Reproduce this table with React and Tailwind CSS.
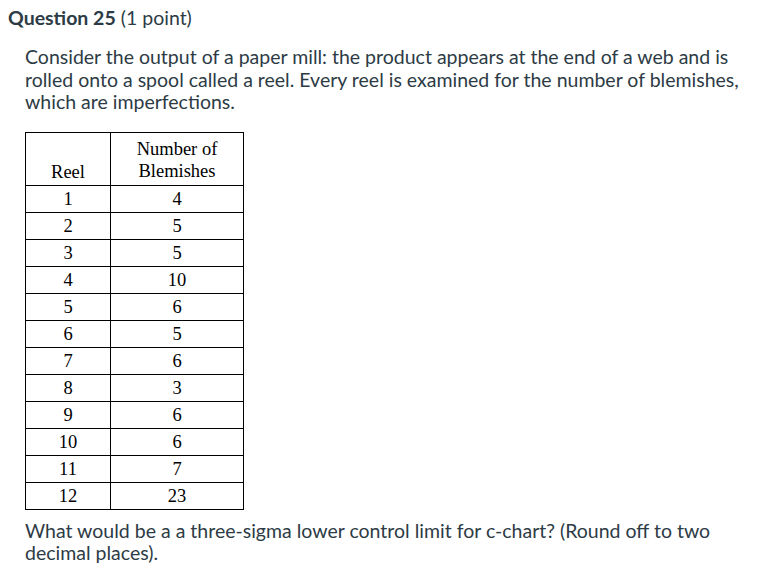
const rows = [
  [1, 4], [2, 5], [3, 5], [4, 10], [5, 6], [6, 5],
  [7, 6], [8, 3], [9, 6], [10, 6], [11, 7], [12, 23],
];

export default function App() {
  return (
    <div className="w-[768px] h-[575px] bg-white text-[#2d3b45] font-['Lato',sans-serif] overflow-hidden">
      <h2 className="pl-[8px] pt-[6px] text-[19.5px] leading-[24px]">
        <span className="font-bold">Question 25</span> (1 point)
      </h2>

      <div className="pl-[25px] mt-[16px] text-[19.5px] leading-[22.5px] whitespace-nowrap">
        <p>
          Consider the output of a paper mill: the product appears at the end of a web and is<br />
          rolled onto a spool called a reel. Every reel is examined for the number of blemishes,<br />
          which are imperfections.
        </p>

        {/* TABLE */}
        <table className="mt-[18px] border-collapse border border-black text-black font-['Liberation_Serif',serif] text-[18.5px] leading-[20px]">
          <thead>
            <tr className="h-[53px]">
              <th className="w-[85px] border border-black font-normal align-bottom pb-[3px]">Reel</th>
              <th className="w-[133px] border border-black font-normal align-bottom pb-[3px] leading-[22px]">
                Number of<br />Blemishes
              </th>
            </tr>
          </thead>
          <tbody>
            {rows.map(([r, b]) => (
              <tr key={r} className="h-[27px]">
                <td className="border border-black text-center">{r}</td>
                <td className="border border-black text-center">{b}</td>
              </tr>
            ))}
          </tbody>
        </table>

        <p className="mt-[10px]">
          What would be a a three-sigma lower control limit for c-chart? (Round off to two<br />
          decimal places).
        </p>
      </div>
    </div>
  );
}
